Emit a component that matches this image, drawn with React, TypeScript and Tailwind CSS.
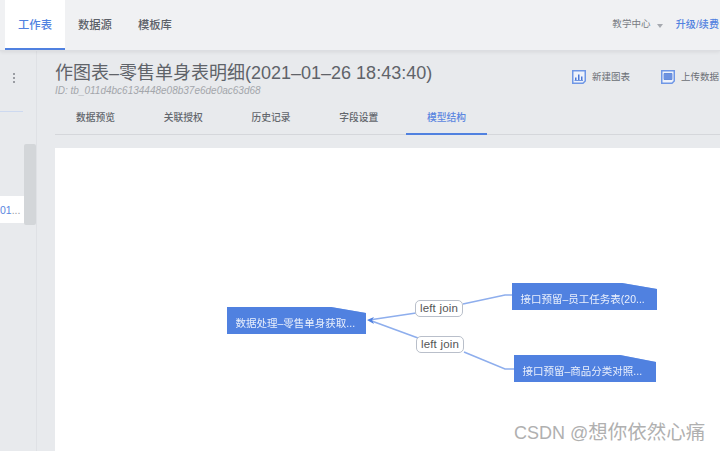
const font = "font-['Liberation_Sans','Noto_Sans_CJK_SC',sans-serif]";

function ChartIcon({ kind }: { kind: "chart" | "table" }) {
  return (
    <svg width="14" height="14" viewBox="0 0 14 14" className="shrink-0">
      <path d="M0.75 0.75H13.25V11L11 13.25H0.75Z" fill="#eef2fb" stroke="#6f97e6" strokeWidth="1.5" />
      {kind === "chart" ? (
        <path d="M3 10V7.5H4.5V10ZM6 10V4.5H7.5V10ZM9 10V6.5H10.5V10ZM2.5 10.2H11V11H2.5Z" fill="#4a78d6" />
      ) : (
        <path d="M3 3.5H11V9.5H3ZM5 3.5V9.5M7 3.5V9.5M9 3.5V9.5" fill="#7fa0e6" stroke="#4a78d6" strokeWidth="0.7" />
      )}
    </svg>
  );
}

function Node({ label, left, top, width, clip }: { label: string; left: number; top: number; width: number; clip: string }) {
  return (
    <div className="absolute drop-shadow-[0_0_0.6px_#8fb0ee]" style={{ left, top, width }}>
      <div
        className="h-[27px] bg-[#5081e0] text-[10.5px] leading-[27px] pt-[3px] pl-[8.5px] text-[#eaf0fc] whitespace-nowrap overflow-hidden"
        style={{ clipPath: clip }}
      >
        {label}
      </div>
    </div>
  );
}

function JoinLabel({ left, top }: { left: number; top: number }) {
  return (
    <div
      className="absolute w-[48px] h-[17px] rounded-[5px] border border-[#b9bfca] bg-white text-[11.5px] leading-[15px] text-center text-[#555] tracking-[0.2px] whitespace-nowrap"
      style={{ left, top }}
    >
      left join
    </div>
  );
}

export default function App() {
  const tabs = ["数据预览", "关联授权", "历史记录", "字段设置", "模型结构"];
  return (
    <div className={`${font} w-[720px] h-[451px] overflow-hidden flex flex-col bg-[#e8eaed] relative`}>
      <header className="h-[51px] shrink-0 bg-[#f0f1f3] border-b border-[#dcdee2] shadow-[0_1px_4px_rgba(0,0,0,0.08)] flex items-stretch pl-[5px] pr-[1px] z-10">
        <div className="w-[60px] bg-white border-b-2 border-[#5081e0] text-[#5081e0] text-[11.3px] font-medium flex items-center justify-center pt-[3px]">工作表</div>
        <div className="flex items-center text-[#5c6068] text-[11.3px] font-medium gap-[26px] pl-[13px] pt-[1px]">
          <span>数据源</span>
          <span>模板库</span>
        </div>
        <div className="ml-auto flex items-center text-[9.5px] tracking-[0.1px] pb-[1px]">
          <span className="text-[#777b82]">教学中心</span>
          <span className="ml-[6px] w-0 h-0 border-x-[3.5px] border-x-transparent border-t-[4px] border-t-[#a6a9af] mt-[2px]" />
          <span className="ml-[13px] text-[10px] text-[#5081e0] font-medium">升级/续费</span>
        </div>
      </header>

      <div className="flex-1 flex min-h-0">
        <aside className="w-[37px] shrink-0 border-r border-[#dfe1e5] flex">
          <div className="w-[24px] flex flex-col">
            <div className="h-[60px] flex flex-col items-end pr-[9px] pt-[22px] gap-[2px]">
              <span className="w-[2px] h-[2px] bg-[#9a9da3]" />
              <span className="w-[2px] h-[2px] bg-[#9a9da3]" />
              <span className="w-[2px] h-[2px] bg-[#9a9da3]" />
            </div>
            <div className="h-px w-[23px] bg-[#cdd9f0]" />
            <div className="mt-[84px] h-[27px] bg-white text-[10.5px] leading-[29px] text-[#5b86e0] pr-[7px] text-right whitespace-nowrap overflow-hidden">01<span className="text-[#9a9da3]">...</span></div>
          </div>
          <div className="w-[12px] mt-[93px] h-[81px] bg-[#d3d6d9] rounded-[2px]" />
        </aside>

        <main className="flex-1 min-w-0 pl-[18px] flex flex-col">
          <div className="h-[49px] relative shrink-0">
            <div className="pt-[10px] text-[18px] leading-[24px] text-[#5f6369] whitespace-nowrap">作图表–零售单身表明细(2021–01–26 18:43:40)</div>
            <div className="text-[10px] leading-[12px] italic text-[#a3a6ab] whitespace-nowrap">ID: tb_011d4bc6134448e08b37e6de0ac63d68</div>
            <div className="absolute top-[19px] left-[517px] flex items-center text-[9.5px] text-[#6b6f75] whitespace-nowrap">
              <ChartIcon kind="chart" />
              <span className="ml-[6px]">新建图表</span>
              <span className="ml-[31px]"><ChartIcon kind="table" /></span>
              <span className="ml-[6px]">上传数据</span>
            </div>
          </div>

          <nav className="h-[36px] shrink-0 border-b border-[#d5d7db] flex items-stretch gap-[6.75px] mt-[-1px]">
            {tabs.map((t, i) => (
              <div
                key={t}
                className={`px-[21px] flex items-center justify-center text-[9.75px] font-medium mb-[-1px] pt-[5px] ${
                  i === 4 ? "text-[#5b86e0] border-b-2 border-[#5081e0]" : "text-[#62666c] border-b-2 border-transparent"
                }`}
              >
                {t}
              </div>
            ))}
          </nav>

          <section className="mt-[13px] flex-1 bg-white relative overflow-hidden">
            <svg width="665" height="303" className="absolute left-0 top-0">
              <g fill="none" stroke="#8eaeed" strokeWidth="1.6">
                <path d="M314 172L361 165" />
                <path d="M314 172L363 190" />
                <path d="M408 156L450 147H458" />
                <path d="M409 204L450 221H459" />
              </g>
              <path d="M312 172L319 169L317 172L319 176Z" fill="#5081e0" />
            </svg>
            <Node label="数据处理–零售单身获取..." left={172} top={159} width={139} clip="polygon(0 0, 104px 0, 139px 6px, 139px 27px, 0 27px)" />
            <Node label="接口预留–员工任务表(20..." left={457} top={135} width={145} clip="polygon(0 0, 110px 0, 145px 6px, 145px 27px, 0 27px)" />
            <Node label="接口预留–商品分类对照..." left={459} top={207} width={142} clip="polygon(0 0, 106px 0, 142px 7px, 142px 27px, 0 27px)" />
            <JoinLabel left={360} top={152} />
            <JoinLabel left={361} top={188} />
            <div className="absolute left-[459px] top-[272px] text-[18px] leading-[24px] text-[#b0b0b0] whitespace-nowrap [text-shadow:0_0_1px_#fff]">
              CSDN @<span className="text-[19.5px]">想你依然心痛</span>
            </div>
          </section>
        </main>
      </div>
    </div>
  );
}
